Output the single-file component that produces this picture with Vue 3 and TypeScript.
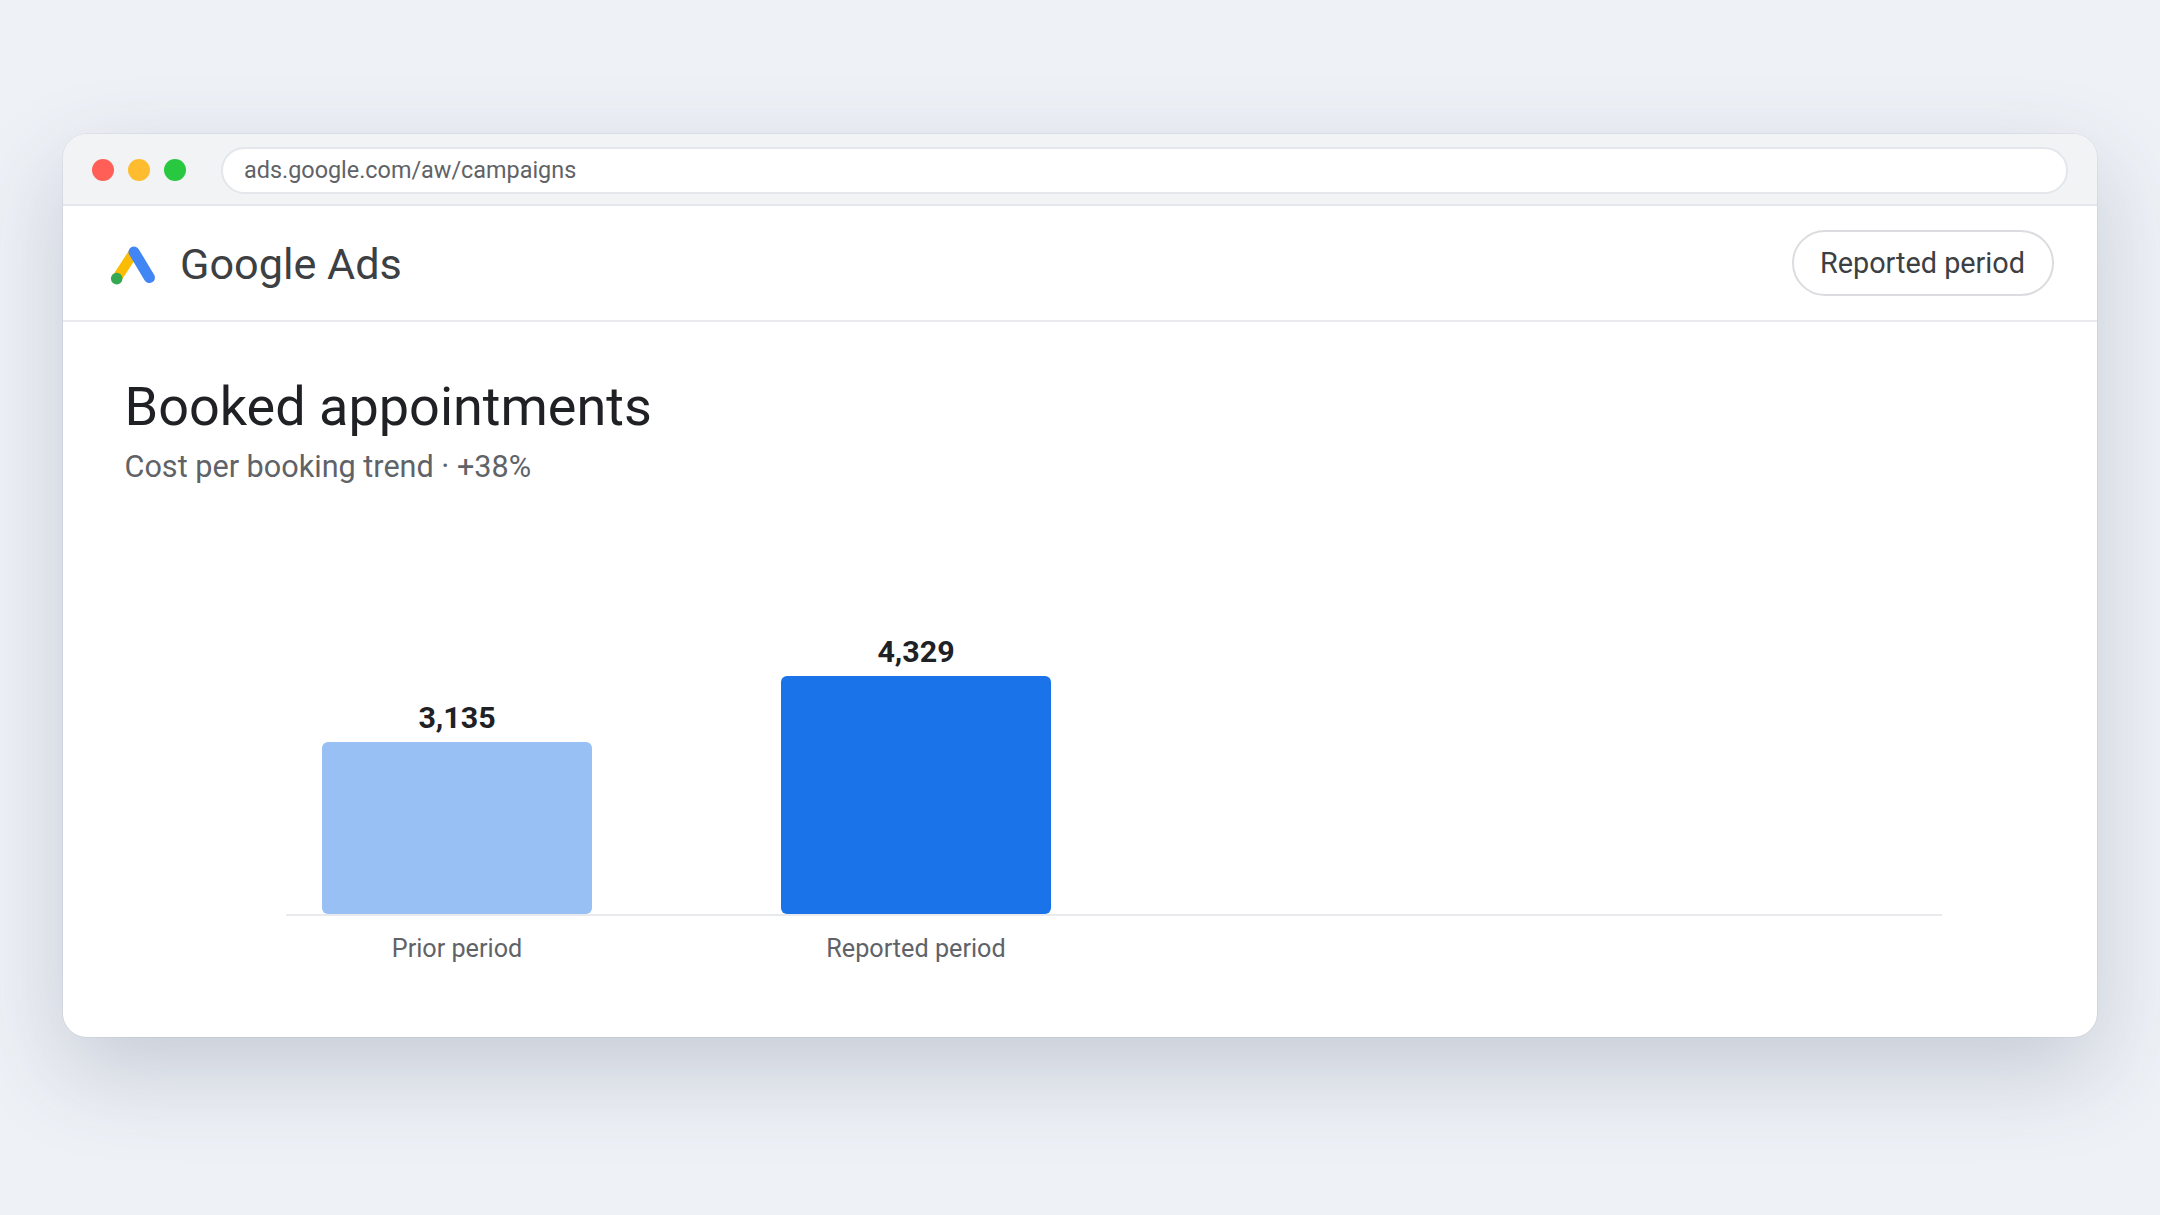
<script setup lang="ts">
type Bar = { label: string; value: number; color: string }

const maxHeight = 238
const bars: Bar[] = [
  { label: 'Prior period', value: 3135, color: '#98c0f5' },
  { label: 'Reported period', value: 4329, color: '#1a73e8' },
]
const maxValue = Math.max(...bars.map((b) => b.value))

function barHeight(value: number) {
  return Math.round((value / maxValue) * maxHeight) + 'px'
}
</script>

<template>
  <div class="page">
    <div class="window">
      <div class="chrome">
        <div class="dots">
          <span class="dot red"></span>
          <span class="dot amber"></span>
          <span class="dot green"></span>
        </div>
        <div class="address">ads.google.com/aw/campaigns</div>
      </div>
      <header class="nav">
        <div class="brand">
          <svg class="logo" viewBox="0 0 46 42" width="46" height="42" xmlns="http://www.w3.org/2000/svg">
            <line x1="25" y1="9" x2="7.7" y2="35.6" stroke="#fbbc04" stroke-width="10" stroke-linecap="round" />
            <line x1="25" y1="9" x2="40.4" y2="34.6" stroke="#4285f4" stroke-width="11" stroke-linecap="round" />
            <circle cx="7.7" cy="35.6" r="5.8" fill="#34a853" />
          </svg>
          <span class="brand-name">Google Ads</span>
        </div>
        <button class="period">Reported period</button>
      </header>
      <main class="content">
        <h1 class="title">Booked appointments</h1>
        <p class="subtitle">Cost per booking trend · +38%</p>
        <div class="chart">
          <div class="plot">
            <div v-for="bar in bars" :key="bar.label" class="column">
              <div class="value">{{ bar.value.toLocaleString('en-US') }}</div>
              <div class="bar" :style="{ height: barHeight(bar.value), background: bar.color }"></div>
            </div>
          </div>
          <div class="labels">
            <div v-for="bar in bars" :key="bar.label" class="label">{{ bar.label }}</div>
          </div>
        </div>
      </main>
    </div>
  </div>
</template>

<style>
html,
body {
  margin: 0;
  background: #eef1f6;
}
</style>

<style scoped>
.page {
  box-sizing: border-box;
  height: 1215px;
  padding: 134px 63px 0;
  background: #eef1f6;
  font-family: Roboto, "Liberation Sans", sans-serif;
  overflow: hidden;
}

.window {
  height: 903px;
  background: #fff;
  border-radius: 24px;
  overflow: hidden;
  box-shadow: 0 34px 90px rgba(60, 72, 100, 0.22);
  outline: 1px solid rgba(60, 72, 100, 0.06);
}

.chrome {
  box-sizing: border-box;
  height: 72px;
  display: flex;
  align-items: center;
  gap: 35px;
  padding: 2px 29px 0;
  background: #f1f3f5;
  border-bottom: 2px solid #e3e6ea;
}

.dots {
  display: flex;
  gap: 14px;
}

.dot {
  width: 22px;
  height: 22px;
  border-radius: 50%;
}

.red { background: #ff5f57; }
.amber { background: #febc2e; }
.green { background: #28c840; }

.address {
  flex: 1;
  box-sizing: border-box;
  height: 47px;
  line-height: 43px;
  padding: 0 21px;
  background: #fff;
  border: 2px solid #e3e6ea;
  border-radius: 24px;
  font-size: 23.4px;
  color: #5f6368;
}

.nav {
  box-sizing: border-box;
  height: 116px;
  display: flex;
  align-items: center;
  justify-content: space-between;
  padding: 1px 43.5px 0 46px;
  border-bottom: 2px solid #e8eaed;
}

.brand {
  display: flex;
  align-items: center;
  gap: 25px;
}

.logo {
  display: block;
}

.brand-name {
  margin-top: 2px;
  font-size: 43.2px;
  color: #3c4043;
}

.period {
  box-sizing: border-box;
  height: 66px;
  width: 262px;
  margin-top: -2px;
  padding: 0;
  background: #fff;
  border: 2px solid #dadce0;
  border-radius: 33px;
  font-family: inherit;
  font-size: 28.8px;
  color: #3c4043;
}

.content {
  padding: 53px 62px 0 61.5px;
}

.title {
  margin: 0;
  font-size: 54px;
  line-height: 64px;
  font-weight: 400;
  color: #202124;
}

.subtitle {
  margin: 8px 0 0;
  font-size: 30.6px;
  line-height: 40px;
  color: #5f6368;
}

.chart {
  margin: 0 93px 0 161.5px;
}

.plot {
  height: 288px;
  display: flex;
  align-items: flex-end;
  gap: 189px;
  padding-left: 36px;
  margin-top: 139px;
  border-bottom: 2px solid #e8eaed;
}

.column {
  width: 270px;
  display: flex;
  flex-direction: column;
}

.value {
  text-align: center;
  font-size: 30.4px;
  line-height: 40px;
  font-weight: 700;
  color: #202124;
  margin-bottom: 4px;
}

.bar {
  border-radius: 6px;
}

.labels {
  display: flex;
  gap: 189px;
  padding-left: 36px;
  margin-top: 16px;
}

.label {
  width: 270px;
  text-align: center;
  font-size: 25.2px;
  line-height: 34px;
  color: #5f6368;
}
</style>
